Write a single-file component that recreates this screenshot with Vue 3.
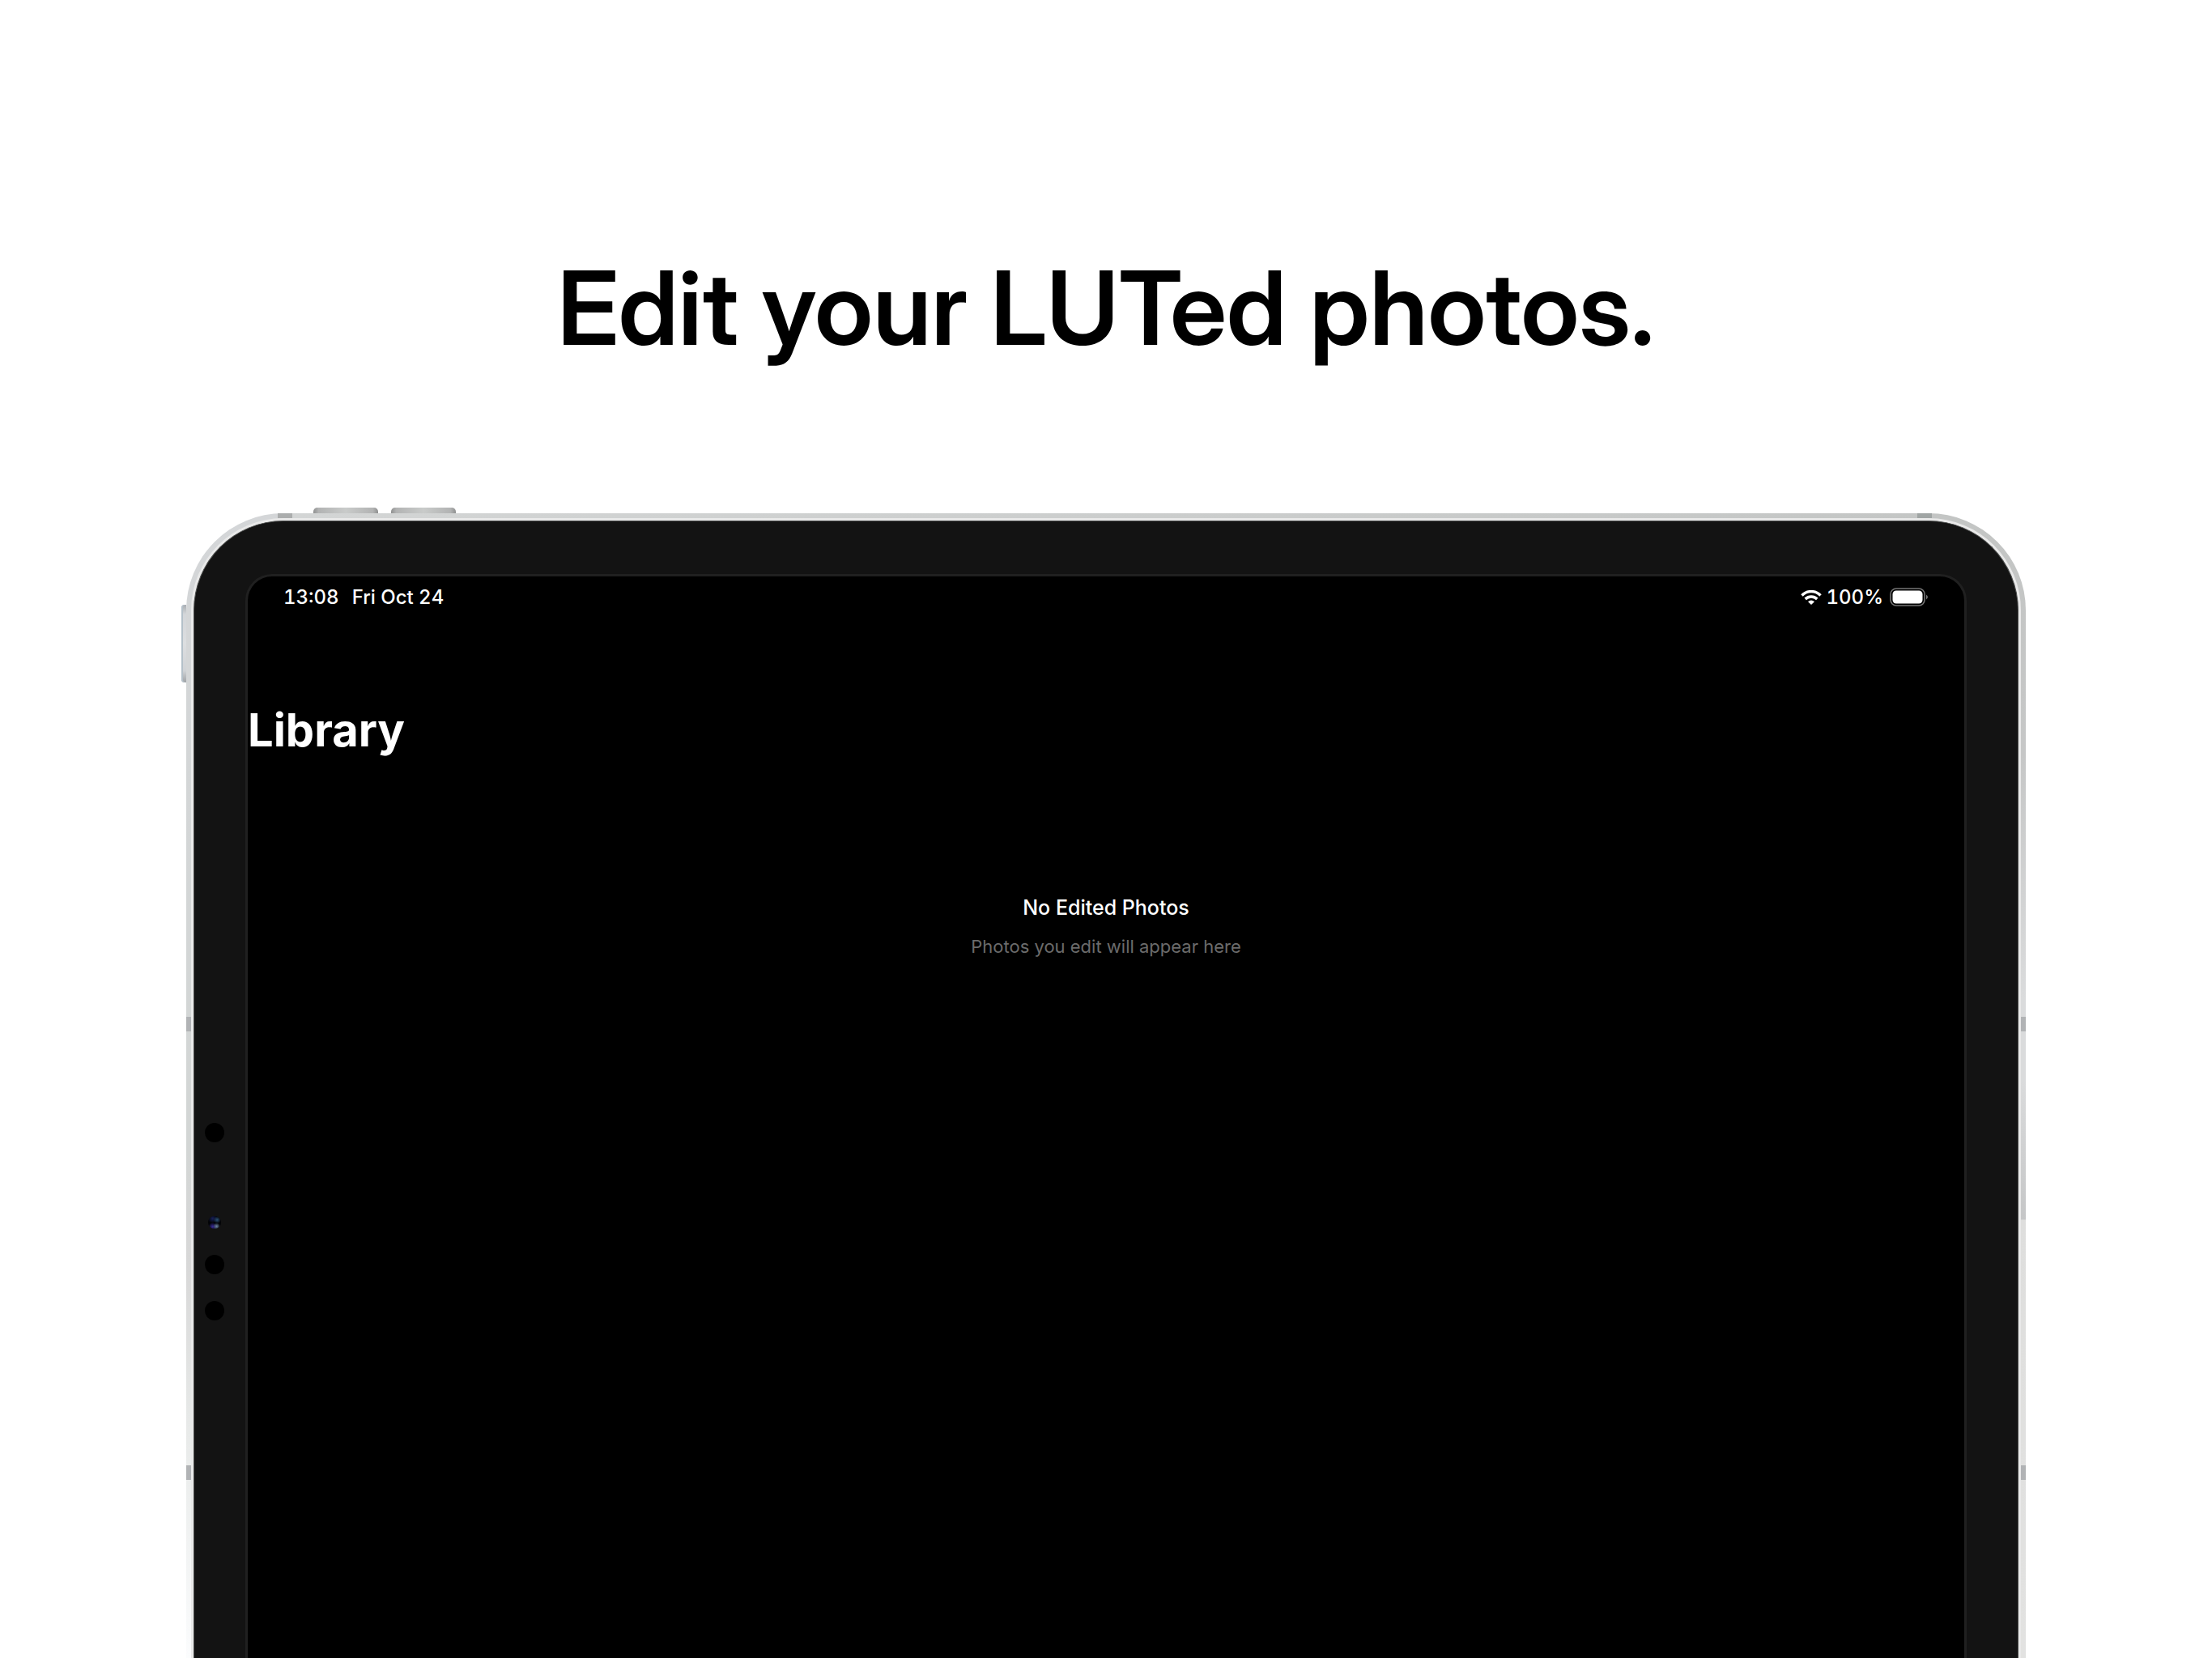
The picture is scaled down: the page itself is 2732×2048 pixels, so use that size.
<script setup>
const sensors = ['mic', 'camera', 'projector', 'proximity']
const bands = ['top-start', 'top-end', 'left-upper', 'left-lower', 'right-upper', 'right-lower']
</script>

<template>
  <main class="page">
    <h1 class="headline">Edit your LUTed photos.</h1>

    <section class="device">
      <span class="key volume-up"></span>
      <span class="key volume-down"></span>
      <span class="key power"></span>
      <span v-for="band in bands" :key="band" class="band" :class="band"></span>

      <div class="rim">
        <div class="bezel">
          <span v-for="sensor in sensors" :key="sensor" class="sensor" :class="sensor"></span>

          <div class="screen">
            <header class="status">
              <time>13:08</time>
              <span class="date">Fri Oct 24</span>
              <svg class="wifi" viewBox="0 0 26 18" aria-label="Wi-Fi">
                <path d="M1.5 6.400C8 0 18 0 24.500 6.400" fill="none" stroke="#fff" stroke-width="3.500" />
                <path d="M5.700 10.900C10 6.900 16 6.900 20.300 10.900" fill="none" stroke="#fff" stroke-width="3.500" />
                <path d="M9 14.200Q13 10.600 17 14.200L13 18Z" fill="#fff" />
              </svg>
              <span>100%</span>
              <svg class="battery" viewBox="0 0 49 24" aria-label="Battery full">
                <rect x="1" y="1" width="42" height="21" rx="7" fill="none" stroke="#747474" stroke-width="1.600" />
                <rect x="3.500" y="3.500" width="37" height="16" rx="4.500" fill="#fff" />
                <path d="M45 8.500q4 3 0 6z" fill="#747474" />
              </svg>
            </header>

            <h2 class="title">Library</h2>

            <div class="empty">
              <p class="empty-title">No Edited Photos</p>
              <p class="empty-text">Photos you edit will appear here</p>
            </div>
          </div>
        </div>
      </div>
    </section>
  </main>
</template>

<style>
body {
  margin: 0;
  background: #fff;
}
</style>

<style scoped>
.page {
  box-sizing: border-box;
  min-height: 100vh;
  padding: 300px 230px 0;
  display: flex;
  flex-direction: column;
  font-family: Inter, "Liberation Sans", sans-serif;
}

.headline {
  margin: 0 0 174px;
  color: #000;
  font-family: "Inter Display", Inter, "Liberation Sans", sans-serif;
  font-size: 126px;
  font-weight: 600;
  font-variation-settings: "opsz" 32;
  line-height: 160px;
  text-align: center;
}

.device {
  position: relative;
  box-sizing: border-box;
  flex: 1;
  display: flex;
  padding: 6px 6px 0;
  border-radius: 120px 120px 0 0;
  background:
    linear-gradient(#c3c5c4 0, #c6c7c7 300px, #dadbdc 600px, #dadbdc 700px, #c5c6c7 872px, #dededd 873px, #e2e2e1 100%) right / 120px 100% no-repeat,
    linear-gradient(#d4d6d8 0, #d3d6d5 780px, #d8d8d8 930px, #e8eae9 1130px, #fbfcfd 100%) left / 120px 100% no-repeat,
    linear-gradient(90deg, #d4d6d6, #c3c5c4);
}

.rim {
  flex: 1;
  display: flex;
  padding: 3px 3px 0;
  border-radius: 114px 114px 0 0;
  background: #e9e9e9;
}

.bezel {
  position: relative;
  flex: 1;
  display: flex;
  padding: 65px 63px 0;
  border: solid #4b4d4c;
  border-width: 1px 1px 0;
  border-radius: 111px 111px 0 0;
  background: #131313;
}

.screen {
  flex: 1;
  border: solid #202020;
  border-width: 3px 3px 0;
  border-radius: 33px 33px 0 0;
  background: #000;
  color: #fff;
}

.status {
  display: flex;
  align-items: center;
  padding: 10px 43px 0 44px;
  font-size: 24px;
  font-weight: 500;
  font-variant-numeric: tabular-nums;
  line-height: 32px;
}

.date {
  margin: 0 auto 0 16px;
}

.wifi {
  width: 26px;
  height: 18px;
  margin-right: 6px;
}

.battery {
  width: 49px;
  height: 24px;
  margin-left: 8px;
}

.title {
  margin: 112px 0 0;
  font-size: 56px;
  font-weight: 700;
  line-height: 72px;
}

.empty {
  margin-top: 167px;
  text-align: center;
}

.empty-title {
  margin: 0 0 16px;
  font-size: 25px;
  font-weight: 500;
  line-height: 32px;
}

.empty-text {
  margin: 0;
  color: #6b6b6b;
  font-size: 22px;
  line-height: 32px;
}

.key {
  position: absolute;
}

.volume-up,
.volume-down {
  top: -7px;
  left: 157px;
  width: 80px;
  height: 7px;
  border-radius: 5px 5px 0 0;
  background: linear-gradient(90deg, #8f9090, #b2b3b3 8%, #c9cbca 50%, #b2b3b3 92%, #8f9090);
}

.volume-down {
  left: 253px;
}

.power {
  top: 113px;
  left: -6px;
  width: 6px;
  height: 96px;
  border-radius: 4px 0 0 4px;
  background: linear-gradient(#a8acb0, #d3d6d9 12%, #dcdee0 50%, #d0d3d6 85%, #9fa2a5);
  box-shadow: inset 2px 0 #b4c0c9;
}

.band {
  position: absolute;
  width: 6px;
  height: 18px;
  background: #b1b3b5;
}

.top-start,
.top-end {
  top: 0;
  left: 113px;
  width: 18px;
  height: 6px;
  background: #abadad;
}

.top-end {
  right: 116px;
  left: auto;
  background: #a0a5a4;
}

.left-upper,
.right-upper {
  top: 622px;
}

.left-lower,
.right-lower {
  top: 1176px;
}

.left-upper,
.left-lower {
  left: 0;
}

.right-upper,
.right-lower {
  right: 0;
}

.sensor {
  position: absolute;
  left: 13px;
  width: 24px;
  height: 24px;
  border-radius: 50%;
  background: #000;
}

.mic {
  top: 743px;
}

.camera {
  top: 858px;
  left: 17px;
  width: 16px;
  height: 16px;
  background:
    radial-gradient(circle at 70% 30%, #2c5277 0, transparent 28%),
    radial-gradient(circle at 66% 80%, #7088a8 0, transparent 26%),
    radial-gradient(circle at 35% 82%, #3a2c9a 0, transparent 30%),
    radial-gradient(circle at 35% 20%, #17205a 0, transparent 34%),
    #020306;
}

.projector {
  top: 906px;
}

.proximity {
  top: 963px;
}
</style>
